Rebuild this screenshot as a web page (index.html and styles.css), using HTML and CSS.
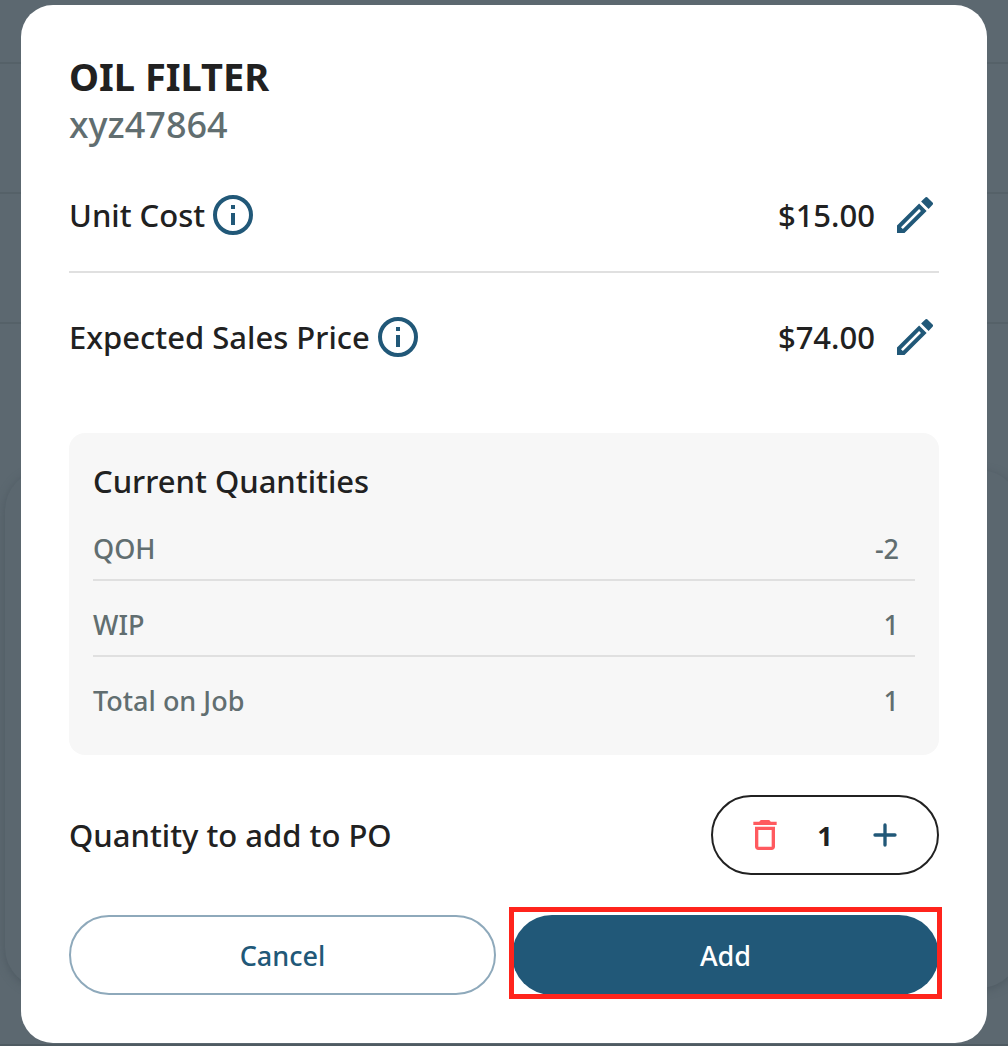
FILE: index.html
```html
<!DOCTYPE html>
<html lang="en">
<head>
  <meta charset="utf-8">
  <meta name="viewport" content="width=device-width, initial-scale=1">
  <title>Oil Filter</title>
  <link rel="stylesheet" href="styles.css">
</head>
<body>

  <!-- dimmed page behind the dialog -->
  <div class="backdrop">
    <div class="line"></div>
    <div class="line"></div>
    <div class="line"></div>
    <div class="panel"></div>
    <div class="footer-line"></div>
  </div>

  <main class="dialog" role="dialog" aria-labelledby="part-name">
    <h1 id="part-name">OIL FILTER</h1>
    <p class="part-number">xyz47864</p>

    <div class="price-row">
      <span>Unit Cost</span>
      <button class="icon-button info" type="button" aria-label="About unit cost">
        <svg viewBox="0 0 24 24"><circle cx="12" cy="12" r="9"/><path d="M12 7v2M12 11v6"/></svg>
      </button>
      <span class="price">$15.00</span>
      <button class="icon-button edit" type="button" aria-label="Edit unit cost">
        <svg viewBox="0 0 24 24"><path d="M3 17.25V21h3.75L17.81 9.94l-3.75-3.75zM5.92 19L5 18.08l9.06-9.06.92.92zM17.3 3.1l-2.25 2.1 3.75 3.75 2.1-2.25q.3-.4 0-.8l-2.8-2.8q-.4-.3-.8 0z"/></svg>
      </button>
    </div>

    <div class="price-row">
      <span>Expected Sales Price</span>
      <button class="icon-button info" type="button" aria-label="About expected sales price">
        <svg viewBox="0 0 24 24"><circle cx="12" cy="12" r="9"/><path d="M12 7v2M12 11v6"/></svg>
      </button>
      <span class="price">$74.00</span>
      <button class="icon-button edit" type="button" aria-label="Edit expected sales price">
        <svg viewBox="0 0 24 24"><path d="M3 17.25V21h3.75L17.81 9.94l-3.75-3.75zM5.92 19L5 18.08l9.06-9.06.92.92zM17.3 3.1l-2.25 2.1 3.75 3.75 2.1-2.25q.3-.4 0-.8l-2.8-2.8q-.4-.3-.8 0z"/></svg>
      </button>
    </div>

    <section class="quantities">
      <h2>Current Quantities</h2>
      <dl>
        <div><dt>QOH</dt><dd>-2</dd></div>
        <div><dt>WIP</dt><dd>1</dd></div>
        <div><dt>Total on Job</dt><dd>1</dd></div>
      </dl>
    </section>

    <div class="add-row">
      <label for="quantity">Quantity to add to PO</label>
      <div class="stepper">
        <button class="remove" type="button" aria-label="Remove">
          <svg viewBox="0 0 24 24"><path d="M6 19c0 1.1.9 2 2 2h8c1.1 0 2-.9 2-2V7H6v12zM8 9h8v10H8V9zm7.5-5l-1-1h-5l-1 1H5v2h14V4h-3.5z"/></svg>
        </button>
        <input id="quantity" type="text" inputmode="numeric" value="1">
        <button class="plus" type="button" aria-label="Increase">
          <svg viewBox="0 0 24 24"><path d="M12 6v12M6 12h12"/></svg>
        </button>
      </div>
    </div>

    <div class="actions">
      <button class="cancel" type="button">Cancel</button>
      <div class="highlight">
        <button class="add" type="button">Add</button>
      </div>
    </div>
  </main>

</body>
</html>
```
FILE: styles.css
```css
* {
  box-sizing: border-box;
}

body {
  margin: 0;
  padding: 5px 21px 3px;
  background: #5c6870;
  color: #212121;
  font-family: "Noto Sans", "Open Sans", sans-serif;
  font-size: 31px;
  font-weight: 500;
}

h1, h2, p, dl, dd {
  margin: 0;
}

button, input {
  padding: 0;
  border: 0;
  background: none;
  color: inherit;
  font: inherit;
}

button {
  cursor: pointer;
}

svg {
  display: block;
  width: 100%;
  height: 100%;
}

/* page behind */
.backdrop {
  position: fixed;
  inset: 0;
  z-index: -1;
  display: flex;
  flex-direction: column;
  padding-top: 62px;
}

.line {
  height: 2px;
  margin-bottom: 128px;
  background: #556168;
}

.panel {
  flex: 1;
  margin: 18px -12px 56px 5px;
  border-radius: 40px;
  background: #5b676f;
  box-shadow: 0 2px 8px #4e5a62;
}

.footer-line {
  height: 2px;
  background: #4f5b62;
}

/* dialog */
.dialog {
  padding: 48px;
  border-radius: 32px;
  background: #fff;
}

h1 {
  font-size: 38px;
  font-weight: 700;
  line-height: 46px;
}

.part-number {
  color: #616e70;
  font-size: 36px;
  line-height: 52px;
}

.price-row {
  display: flex;
  align-items: center;
  padding: 40px 0 32px;
}

.price-row + .price-row {
  border-top: 2px solid #e0e0e0;
}

.icon-button {
  width: 48px;
  height: 48px;
  color: #215878;
}

.info {
  margin-left: 4px;
}

.info svg {
  fill: none;
  stroke: currentColor;
  stroke-width: 2;
}

.edit svg, .remove svg {
  fill: currentColor;
}

.price {
  margin: 0 16px 0 auto;
}

.quantities {
  margin-top: 40px;
  padding: 24px;
  border-radius: 16px;
  background: #f7f7f7;
}

h2 {
  font-size: 31px;
  font-weight: 500;
  line-height: 48px;
}

dl div {
  display: flex;
  justify-content: space-between;
  padding: 26px 16px 12px 0;
  color: #616e70;
  font-size: 27px;
  line-height: 36px;
}

dl div:not(:last-child) {
  border-bottom: 2px solid #e0e0e0;
}

.add-row {
  display: flex;
  align-items: center;
  justify-content: space-between;
  margin: 40px 0;
}

.stepper {
  display: flex;
  align-items: center;
  gap: 20px;
  height: 80px;
  padding: 0 32px;
  border: 2px solid #212121;
  border-radius: 40px;
}

.stepper button, .stepper input {
  width: 40px;
  height: 40px;
}

.stepper input {
  font-size: 27px;
  font-weight: 700;
  text-align: center;
}

.remove {
  color: #ff5a5f;
}

.plus {
  color: #215878;
}

.plus svg {
  fill: none;
  stroke: currentColor;
  stroke-width: 2;
  stroke-linecap: round;
}

.actions {
  display: grid;
  grid-template-columns: 1fr 1fr;
  gap: 16px;
}

.actions button {
  width: 100%;
  height: 80px;
  border-radius: 40px;
  font-size: 27px;
}

.cancel {
  border: 2px solid #8ea9bb;
  color: #215878;
}

.add {
  background: #215878;
  color: #fff;
}

/* call-out box round the main action */
.highlight {
  position: relative;
}

.highlight::after {
  content: "";
  position: absolute;
  inset: -8px -3px -4px;
  border: 5px solid #ff241c;
  pointer-events: none;
}
```
